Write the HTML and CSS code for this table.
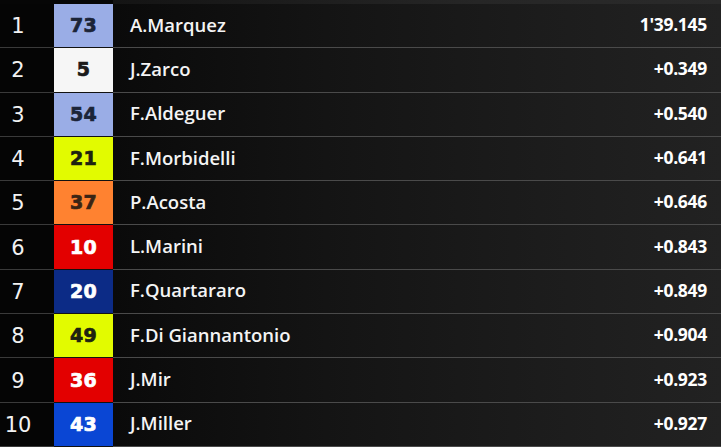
FILE: index.html
```html
<!DOCTYPE html>
<html>
<head>
<meta charset="utf-8">
<link rel="stylesheet" href="styles.css">
</head>
<body>
<div class="board">
  <div class="top"><div class="top-l"></div><div class="top-r"></div></div>
  <div class="row"><div class="pos">1</div><div class="num c-peri">73</div><div class="info"><span class="name">A.Marquez</span><span class="time">1'39.145</span></div></div>
  <div class="row"><div class="pos">2</div><div class="num c-white">5</div><div class="info"><span class="name">J.Zarco</span><span class="time">+0.349</span></div></div>
  <div class="row"><div class="pos">3</div><div class="num c-peri">54</div><div class="info"><span class="name">F.Aldeguer</span><span class="time">+0.540</span></div></div>
  <div class="row"><div class="pos">4</div><div class="num c-yellow">21</div><div class="info"><span class="name">F.Morbidelli</span><span class="time">+0.641</span></div></div>
  <div class="row"><div class="pos">5</div><div class="num c-orange">37</div><div class="info"><span class="name">P.Acosta</span><span class="time">+0.646</span></div></div>
  <div class="row"><div class="pos">6</div><div class="num c-red">10</div><div class="info"><span class="name">L.Marini</span><span class="time">+0.843</span></div></div>
  <div class="row"><div class="pos">7</div><div class="num c-navy">20</div><div class="info"><span class="name">F.Quartararo</span><span class="time">+0.849</span></div></div>
  <div class="row"><div class="pos">8</div><div class="num c-yellow">49</div><div class="info"><span class="name">F.Di Giannantonio</span><span class="time">+0.904</span></div></div>
  <div class="row"><div class="pos">9</div><div class="num c-red">36</div><div class="info"><span class="name">J.Mir</span><span class="time">+0.923</span></div></div>
  <div class="row"><div class="pos">10</div><div class="num c-blue">43</div><div class="info"><span class="name">J.Miller</span><span class="time">+0.927</span></div></div>
</div>
</body>
</html>
```
FILE: styles.css
```css
html, body {
  margin: 0;
  padding: 0;
  background: #050505;
  width: 721px;
  height: 447px;
  overflow: hidden;
}
.board {
  display: flex;
  flex-direction: column;
  width: 721px;
}
.top {
  display: grid;
  grid-template-columns: 113px 1fr;
  height: 4px;
}
.top-l { background: #060606; }
.top-r { background: linear-gradient(90deg, #141414, #262626 60%, #2a2a2a); }
.row {
  display: grid;
  grid-template-columns: 54px 59px 1fr;
  height: 44.3px;
  box-sizing: border-box;
}
.pos {
  background: #050505;
  border-bottom: 1px solid #3a3a3a;
  color: #f2f2f2;
  font-family: "DejaVu Sans", sans-serif;
  font-size: 21px;
  font-weight: 400;
  display: flex;
  align-items: center;
  justify-content: center;
  padding-right: 18px;
  padding-top: 1px;
}
.num {
  border-bottom: 1px solid #111;
  font-family: "DejaVu Sans", sans-serif;
  font-weight: 700;
  font-size: 19px;
  letter-spacing: 0.3px;
  -webkit-text-stroke: 0.7px currentColor;
  display: flex;
  align-items: center;
  justify-content: center;
  color: #1d2436;
  padding-bottom: 1px;
}
.c-peri { background: #9aade6; color: #1c2438; }
.c-white { background: #f6f6f6; color: #1b1b1b; }
.c-yellow { background: #e2fb00; color: #1d2210; }
.c-orange { background: #ff8230; color: #3a2414; }
.c-red { background: #e30000; color: #ffffff; }
.c-navy { background: #0c2b86; color: #ffffff; }
.c-blue { background: #0a46d4; color: #ffffff; }
.info {
  display: flex;
  align-items: center;
  justify-content: space-between;
  padding: 0 14px 3px 17px;
  background: linear-gradient(90deg, #0a0a0a, #141414 35%, #1c1c1c 70%, #222 100%);
  border-bottom: 1px solid #4a4a4a;
}
.name {
  color: #f4f4f4;
  font-family: "Open Sans", sans-serif;
  font-weight: 600;
  font-size: 18.5px;
}
.time {
  color: #ffffff;
  font-family: "Open Sans", sans-serif;
  font-weight: 700;
  font-size: 17.5px;
  letter-spacing: -0.3px;
}
```
